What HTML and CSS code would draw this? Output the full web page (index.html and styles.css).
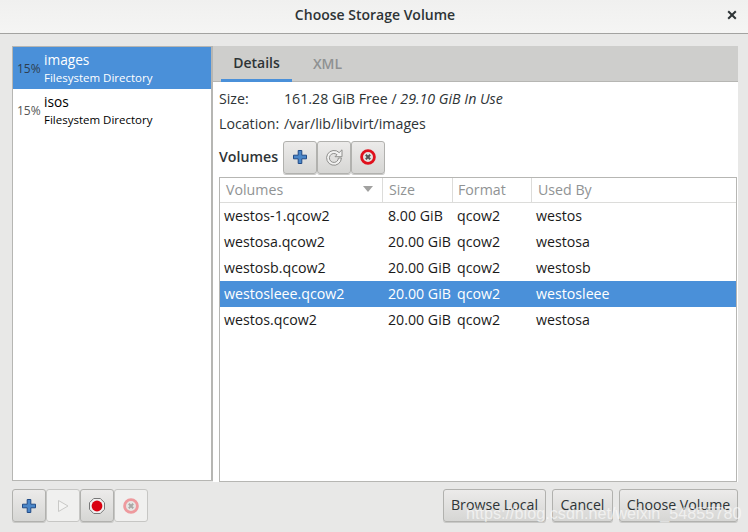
FILE: index.html
```html
<!DOCTYPE html>
<html lang="en">
<head>
<meta charset="utf-8">
<title>Choose Storage Volume</title>
<link rel="stylesheet" href="styles.css">
</head>
<body>
<div class="window">
  <header class="titlebar">
    <span class="title">Choose Storage Volume</span>
    <svg class="close" width="10" height="10" viewBox="0 0 10 10"><path d="M1.2 1.2 8.8 8.8M8.8 1.2 1.2 8.8" stroke="#2e3436" stroke-width="2"/></svg>
  </header>
  <main class="content">
    <div class="panes">
      <aside class="pools">
        <div class="pool selected">
          <span class="pct">15%</span>
          <div class="pool-text"><span class="pool-name">images</span><span class="pool-type">Filesystem Directory</span></div>
        </div>
        <div class="pool">
          <span class="pct">15%</span>
          <div class="pool-text"><span class="pool-name">isos</span><span class="pool-type">Filesystem Directory</span></div>
        </div>
      </aside>
      <section class="detail">
        <nav class="tabs">
          <span class="tab active">Details</span>
          <span class="tab">XML</span>
        </nav>
        <div class="page">
          <div class="info"><span class="info-label">Size:</span><span>161.28 GiB Free / <em>29.10 GiB In Use</em></span></div>
          <div class="info second"><span class="info-label">Location:</span><span>/var/lib/libvirt/images</span></div>
          <div class="vol-head">
            <strong>Volumes</strong>
            <div class="linked">
              <button class="btn icon">
                <svg width="16" height="16" viewBox="0 0 16 16"><path d="M6.2 1.5h3.6v4.7h4.7v3.6H9.8v4.7H6.2V9.8H1.5V6.2h4.7z" fill="#4a86c8" stroke="#204a87"/></svg>
              </button>
              <button class="btn icon">
                <svg width="20" height="20" viewBox="0 0 20 20"><path d="M15.2 5.6A7.4 7.4 0 1 0 17.4 11h-3a4.5 4.5 0 1 1-1.4-3.3L11 9.7h7V2.8z" fill="#f2f2f1" stroke="#8f8f8d"/></svg>
              </button>
              <button class="btn icon">
                <svg width="18" height="18" viewBox="0 0 18 18"><circle cx="9" cy="9" r="6.4" fill="#e3e3e1" stroke="#e0101c" stroke-width="2.8"/><path d="M6.8 6.8l4.4 4.4M11.2 6.8l-4.4 4.4" stroke="#555" stroke-width="2"/></svg>
              </button>
            </div>
          </div>
          <div class="table">
            <div class="row head">
              <span class="cell c1">Volumes<svg class="sort" width="10" height="6" viewBox="0 0 10 6"><path d="M0 0h10L5 6z" fill="#a1a1a0"/></svg></span>
              <span class="cell c2">Size</span>
              <span class="cell c3">Format</span>
              <span class="cell c4">Used By</span>
            </div>
            <div class="row"><span class="cell c1">westos-1.qcow2</span><span class="cell c2">8.00 GiB</span><span class="cell c3">qcow2</span><span class="cell c4">westos</span></div>
            <div class="row"><span class="cell c1">westosa.qcow2</span><span class="cell c2">20.00 GiB</span><span class="cell c3">qcow2</span><span class="cell c4">westosa</span></div>
            <div class="row"><span class="cell c1">westosb.qcow2</span><span class="cell c2">20.00 GiB</span><span class="cell c3">qcow2</span><span class="cell c4">westosb</span></div>
            <div class="row selected"><span class="cell c1">westosleee.qcow2</span><span class="cell c2">20.00 GiB</span><span class="cell c3">qcow2</span><span class="cell c4">westosleee</span></div>
            <div class="row"><span class="cell c1">westos.qcow2</span><span class="cell c2">20.00 GiB</span><span class="cell c3">qcow2</span><span class="cell c4">westosa</span></div>
          </div>
        </div>
      </section>
    </div>
    <footer class="actions">
      <div class="linked">
        <button class="btn icon">
          <svg width="16" height="16" viewBox="0 0 16 16"><path d="M6.2 1.5h3.6v4.7h4.7v3.6H9.8v4.7H6.2V9.8H1.5V6.2h4.7z" fill="#4a86c8" stroke="#204a87"/></svg>
        </button>
        <button class="btn icon off">
          <svg width="16" height="16" viewBox="0 0 16 16"><path d="M3.5 2.5 13 8l-9.5 5.5z" fill="#f4f4f3" stroke="#c9c9c7"/></svg>
        </button>
        <button class="btn icon">
          <svg width="18" height="18" viewBox="0 0 18 18"><path d="M5.7 1.5h6.6l4.2 4.2v6.6l-4.2 4.2H5.7l-4.2-4.2V5.7z" fill="#f0f0f0" stroke="#777"/><circle cx="9" cy="9" r="5.4" fill="#d90010"/></svg>
        </button>
        <button class="btn icon off">
          <svg width="18" height="18" viewBox="0 0 18 18"><circle cx="9" cy="9" r="6.4" fill="#e6e6e4" stroke="#ee9a9e" stroke-width="2.8"/><path d="M6.8 6.8l4.4 4.4M11.2 6.8l-4.4 4.4" stroke="#a8a8a6" stroke-width="2"/></svg>
        </button>
      </div>
      <div class="dialog-btns">
        <button class="btn text">Browse Local</button>
        <button class="btn text">Cancel</button>
        <button class="btn text">Choose Volume</button>
      </div>
    </footer>
  </main>
  <div class="watermark">https://blog.csdn.net/weixin_54855780</div>
</div>
</body>
</html>
```
FILE: styles.css
```css
* { box-sizing: border-box; }
html, body { margin: 0; height: 100%; }
body {
  font-family: "Open Sans", "Noto Sans", sans-serif;
  font-size: 14.2px;
  color: #2e3436;
  background: #e8e8e7;
  overflow: hidden;
}
.window { position: relative; width: 748px; height: 532px; display: flex; flex-direction: column; }
.titlebar {
  height: 34px;
  flex: none;
  position: relative;
  display: flex;
  align-items: center;
  justify-content: center;
  padding: 0 0 5px 2px;
  background: linear-gradient(#f0f0ef, #f5f5f4);
  border-bottom: 1px solid #a3a3a1;
}
.title { font-weight: 600; font-size: 14px; color: #2e3436; }
.close { position: absolute; right: 11px; top: 10px; }
.content { flex: 1; display: flex; flex-direction: column; padding: 12px 10px 0 12px; }
.panes { display: flex; height: 435px; }
.pools { width: 201px; background: #fff; border: 1px solid #b6b6b3; border-right-width: 2px; }
.pool { height: 42px; display: flex; align-items: center; padding-left: 4px; color: #000; }
.pool.selected { background: #4a90d9; color: #fff; }
.pct { width: 27px; flex: none; font-size: 12px; color: #555; padding-top: 1px; }
.pool.selected .pct { color: #2e3e50; }
.pool-text { display: flex; flex-direction: column; }
.pool-name { font-size: 13.7px; line-height: 19px; }
.pool-type { font-size: 11.5px; line-height: 17px; }
.detail { flex: 1; display: flex; flex-direction: column; min-width: 0; }
.tabs { height: 36px; flex: none; display: flex; padding-left: 8px; background: #cececc; border-bottom: 1px solid #b6b6b3; }
.tab { width: 71px; height: 36px; flex: none; display: flex; align-items: center; justify-content: center; padding-bottom: 2px; font-weight: 600; font-size: 14px; color: #8f9192; }
.tab.active { color: #2e3436; border-bottom: 3px solid #4a90d9; padding-bottom: 0; }
.page { flex: 1; background: #fff; padding: 7px 0 0 6px; display: flex; flex-direction: column; }
.info { display: flex; height: 20px; align-items: center; padding-bottom: 2px; }
.info.second { margin-top: 5px; }
.info-label { width: 65px; flex: none; }
.vol-head { display: flex; align-items: center; gap: 5px; margin-top: 6px; height: 34px; }
.vol-head strong { font-weight: 600; padding-bottom: 1px; }
.linked { display: flex; }
.btn {
  font: inherit;
  color: #2e3436;
  border: 1px solid #b1b1ae;
  border-radius: 3px;
  background: linear-gradient(#ecebea, #d6d6d4);
  box-shadow: 0 1px 0 #c9c9c7;
  padding: 0;
  display: flex;
  align-items: center;
  justify-content: center;
}
.btn.icon { width: 34px; height: 33px; }
.btn.off { background: #f0f0ef; border-color: #c6c6c4; box-shadow: none; }
.table { margin-top: 3px; height: 305px; width: 518px; border: 1px solid #b6b6b3; display: flex; flex-direction: column; color: #1a1a1a; }
.row { display: flex; height: 26px; flex: none; align-items: center; }
.row.head { height: 25px; color: #909394; font-weight: 500; border-bottom: 1px solid #dcdcda; }
.row.selected { background: #4a90d9; color: #fff; }
.cell { display: flex; align-items: center; justify-content: space-between; height: 100%; padding: 0 0 2px 4px; white-space: nowrap; }
.c1 { width: 163px; padding-right: 9px; }
.c2 { width: 70px; padding-left: 5px; }
.c3 { width: 79px; padding-left: 4px; }
.c4 { padding-left: 4px; }
.head .cell { padding-left: 6px; border-right: 1px solid #dcdcda; }
.head .c3 { padding-left: 5px; }
.head .c4 { border-right: 0; flex: 1; }
.actions { display: flex; justify-content: space-between; margin-top: 8px; }
.dialog-btns { display: flex; gap: 6px; }
.btn.text { height: 33px; white-space: nowrap; padding-bottom: 2px; }
.btn.text:first-child { width: 103px; }
.btn.text:nth-child(2) { width: 61px; }
.btn.text:nth-child(3) { width: 119px; }
.watermark { position: absolute; left: 466px; top: 504px; font-family: "Liberation Sans", sans-serif; font-size: 16.2px; color: rgba(255,255,255,.6); white-space: nowrap; }
```
